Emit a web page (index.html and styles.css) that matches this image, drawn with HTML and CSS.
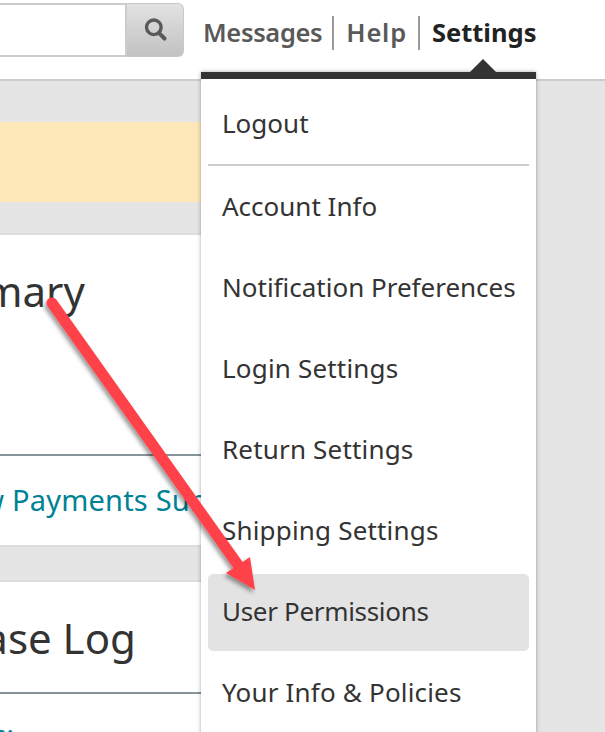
FILE: index.html
```html
<!DOCTYPE html>
<html lang="en">
<head>
<meta charset="utf-8">
<title>Settings menu</title>
<link rel="stylesheet" href="styles.css">
</head>
<body>
<div class="page">
  <header class="topbar">
    <div class="search">
      <div class="search-input"></div>
      <button class="search-btn" aria-label="Search">
        <svg class="search-icon" width="27" height="27" viewBox="0 0 24 24"><circle cx="10.5" cy="10" r="6.5" fill="none" stroke="#595959" stroke-width="3"/><path d="M15 15l5 5" fill="none" stroke="#595959" stroke-width="3.6" stroke-linecap="round"/></svg>
      </button>
    </div>
    <nav class="nav">
      <a class="nav-link nav-messages">Messages</a>
      <span class="nav-sep"></span>
      <a class="nav-link nav-help">Help</a>
      <span class="nav-sep"></span>
      <a class="nav-link nav-active">Settings</a>
    </nav>
  </header>
  <main class="content">
    <div class="banner"></div>
    <section class="card card-first">
      <h2 class="card-title">Summary</h2>
      <div class="card-rule"></div>
      <a class="card-link">View Payments Summary</a>
    </section>
    <section class="card card-second">
      <h2 class="card-title">Release Log</h2>
      <div class="card-rule"></div>
      <a class="card-link">Notes:</a>
    </section>
  </main>
  <div class="menu">
    <span class="menu-caret"></span>
    <a class="menu-item">Logout</a>
    <div class="menu-sep"></div>
    <a class="menu-item">Account Info</a>
    <a class="menu-item">Notification Preferences</a>
    <a class="menu-item menu-wide">Login Settings</a>
    <a class="menu-item menu-wide">Return Settings</a>
    <a class="menu-item menu-wide">Shipping Settings</a>
    <a class="menu-item menu-hover">User Permissions</a>
    <a class="menu-item menu-wide">Your Info &amp; Policies</a>
  </div>
  <svg class="arrow" width="605" height="732" viewBox="0 0 605 732">
    <defs><filter id="sh" x="-20%" y="-20%" width="140%" height="140%"><feDropShadow dx="-2" dy="3" stdDeviation="2" flood-color="#000" flood-opacity=".4"/></filter></defs>
    <g filter="url(#sh)">
      <path d="M52 303L238 565" fill="none" stroke="#ff4349" stroke-width="11" stroke-linecap="round"/>
      <path d="M255 590L226 573L250 557Z" fill="#ff4349"/>
    </g>
  </svg>
</div>
</body>
</html>
```
FILE: styles.css
```css
* { box-sizing: border-box; }
html, body { margin: 0; padding: 0; }
body { font-family: "Noto Sans", "Open Sans", sans-serif; background: #e5e5e5; }
.page { position: relative; width: 605px; height: 732px; overflow: hidden; }

.topbar {
  height: 81px;
  background: #fff;
  border-bottom: 2px solid #ccc;
  display: flex;
  align-items: flex-start;
}
.search { display: flex; width: 184px; height: 54px; margin-top: 3px; }
.search-input { flex: 1; background: #fff; border: 2px solid #ccc; border-left: 0; }
.search-btn {
  width: 57px; padding: 0;
  border: 1px solid #c8c8c8; border-left: 0;
  border-radius: 0 6px 6px 0;
  background: linear-gradient(#e2e2e2, #c2c2c2);
  display: flex; align-items: center; justify-content: center;
}
.search-icon { margin-bottom: 1px; }

.nav { display: flex; align-items: center; height: 34px; margin: 16px 0 0 19px; }
.nav-link { font-size: 25.5px; font-weight: 600; color: #595959; line-height: 34px; position: relative; top: -1px; }
.nav-messages { letter-spacing: -.35px; }
.nav-help { letter-spacing: .8px; margin-right: 1px; }
.nav-active { color: #222; font-weight: 700; }
.nav-sep { width: 2px; height: 34px; background: #999; margin: 0 12px 0 10px; }

.content { padding-top: 41px; }
.banner { height: 80px; width: 300px; background: #fee8b9; }
.card {
  background: #fff;
  border-top: 2px solid #ddd;
  border-bottom: 2px solid #ddd;
  margin-left: -200px;
  width: 600px;
}
.card-first { margin-top: 31px; height: 314px; }
.card-second { margin-top: 33px; height: 300px; }
.card-title { margin: 0; font-size: 42px; font-weight: 400; color: #333; line-height: 56px; }
.card-first .card-title { padding: 28px 0 0 95px; height: 219px; }
.card-second .card-title { padding: 28px 0 0 100px; height: 110px; }
.card-rule { height: 2px; background: #87949a; }
.card-link { display: block; font-size: 29px; letter-spacing: .2px; color: #008296; line-height: 36px; }
.card-first .card-link { padding: 26px 0 0 140px; }
.card-second .card-link { padding: 23px 0 0 125px; }

.menu {
  position: absolute; left: 201px; top: 72px;
  width: 335px; height: 700px;
  background: #fff;
  border-top: 7px solid #333;
  padding: 5px 7px 0;
  box-shadow: 0 0 4px rgba(0,0,0,.35);
  display: flex; flex-direction: column;
}
.menu-caret {
  position: absolute; left: 269px; top: -20px;
  border-left: 13.5px solid transparent;
  border-right: 13.5px solid transparent;
  border-bottom: 13px solid #333;
}
.menu-item {
  height: 77px; margin-bottom: 4px; flex: none;
  display: flex; align-items: center;
  padding-left: 14px;
  font-size: 26px; color: #333;
  border-radius: 5px;
}
.menu-wide { letter-spacing: .18px; }
.menu-sep { height: 2px; background: #ccc; margin: -1px 0 1px; flex: none; }
.menu-hover { background: #e3e3e3; position: relative; top: 2px; padding-bottom: 4px; letter-spacing: -.32px; }
.arrow { position: absolute; left: 0; top: 0; pointer-events: none; }
```
